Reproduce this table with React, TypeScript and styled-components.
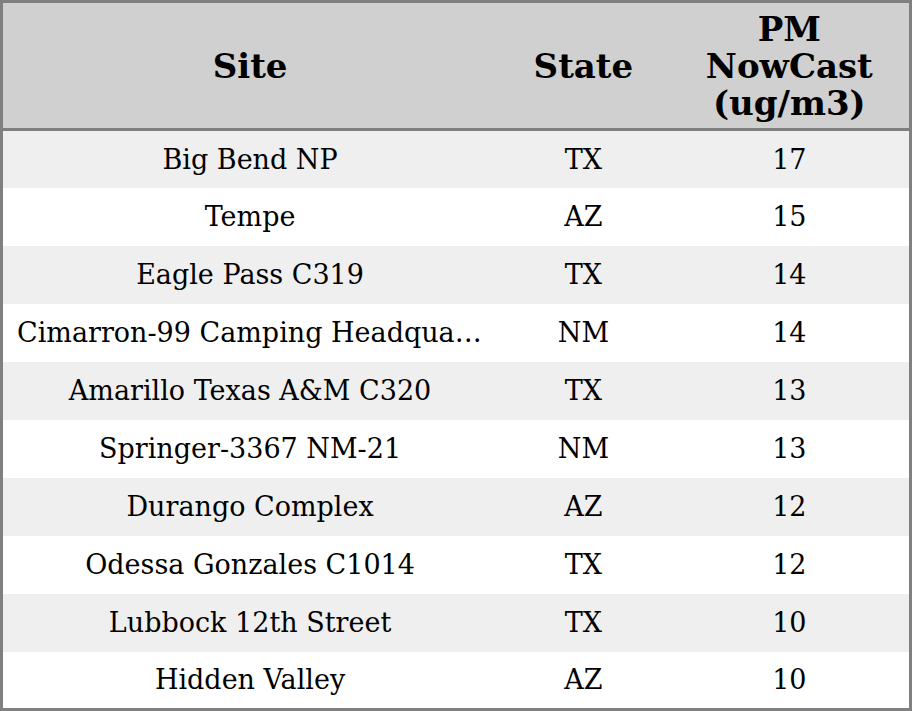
import styled, { createGlobalStyle } from "styled-components";

const GlobalStyle = createGlobalStyle`
  html, body {
    margin: 0;
    padding: 0;
    background: #ffffff;
  }
  #root {
    width: 912px;
    height: 711px;
  }
`;

const rows = [
  { site: "Big Bend NP", state: "TX", pm: 17 },
  { site: "Tempe", state: "AZ", pm: 15 },
  { site: "Eagle Pass C319", state: "TX", pm: 14 },
  { site: "Cimarron-99 Camping Headquarters", state: "NM", pm: 14 },
  { site: "Amarillo Texas A&M C320", state: "TX", pm: 13 },
  { site: "Springer-3367 NM-21", state: "NM", pm: 13 },
  { site: "Durango Complex", state: "AZ", pm: 12 },
  { site: "Odessa Gonzales C1014", state: "TX", pm: 12 },
  { site: "Lubbock 12th Street", state: "TX", pm: 10 },
  { site: "Hidden Valley", state: "AZ", pm: 10 },
];

const Table = styled.table`
  width: 912px;
  height: 711px;
  border: 3px solid #808080;
  border-collapse: collapse;
  table-layout: fixed;
  font-family: "DejaVu Serif", serif;
  color: #000;
`;

const Col = styled.col<{ $w: number }>`
  width: ${(p) => p.$w}px;
`;

const HeadRow = styled.tr`
  height: 128px;
  background: #d0d0d0;
  border-bottom: 3px solid #808080;
`;

const HeadCell = styled.th`
  padding: 2px 14px 0;
  font-size: 34px;
  font-weight: bold;
  line-height: 37px;
  text-align: center;
  vertical-align: middle;
`;

const BodyRow = styled.tr<{ $odd: boolean }>`
  height: 57.7px;
  background: ${(p) => (p.$odd ? "#efefef" : "#ffffff")};
`;

const Cell = styled.td`
  padding: 0 14px;
  font-size: 27px;
  text-align: center;
  vertical-align: middle;
  white-space: nowrap;
  overflow: hidden;
  text-overflow: ellipsis;
`;

export default function App() {
  return (
    <>
      <GlobalStyle />
      <Table>
        <colgroup>
          <Col $w={494} />
          <Col $w={172} />
          <Col $w={240} />
        </colgroup>
        <thead>
          <HeadRow>
            <HeadCell>Site</HeadCell>
            <HeadCell>State</HeadCell>
            <HeadCell>PM NowCast (ug/m3)</HeadCell>
          </HeadRow>
        </thead>
        <tbody>
          {rows.map((r, i) => (
            <BodyRow key={r.site} $odd={i % 2 === 0}>
              <Cell>{r.site}</Cell>
              <Cell>{r.state}</Cell>
              <Cell>{r.pm}</Cell>
            </BodyRow>
          ))}
        </tbody>
      </Table>
    </>
  );
}
